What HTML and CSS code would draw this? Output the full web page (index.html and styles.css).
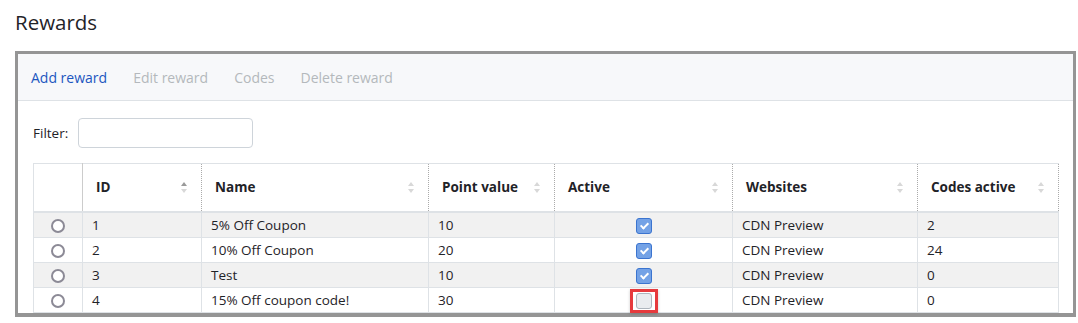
FILE: index.html
```html
<!DOCTYPE html>
<html lang="en">
<head>
  <meta charset="UTF-8" />
  <meta name="viewport" content="width=device-width, initial-scale=1.0"/>
  <title>Rewards</title>
  <link rel="stylesheet" href="styles.css">
</head>
<body>
  <h1 class="page-title">Rewards</h1>

  <div class="panel">
    <div class="toolbar">
      <a href="#" class="tool-link">Add reward</a>
      <span class="tool-link disabled">Edit reward</span>
      <span class="tool-link disabled">Codes</span>
      <span class="tool-link disabled">Delete reward</span>
    </div>

    <div class="filter-row">
      <label for="filter">Filter:</label>
      <input type="text" id="filter" />
    </div>

    <table class="grid">
      <colgroup>
        <col class="w-sel">
        <col class="w-id">
        <col class="w-name">
        <col class="w-points">
        <col class="w-active">
        <col class="w-sites">
        <col class="w-codes">
      </colgroup>
      <thead>
        <tr>
          <th class="sel-col"></th>
          <th><div class="th-inner">ID <span class="sort asc"></span></div></th>
          <th><div class="th-inner">Name <span class="sort"></span></div></th>
          <th><div class="th-inner">Point value <span class="sort"></span></div></th>
          <th><div class="th-inner">Active <span class="sort"></span></div></th>
          <th><div class="th-inner">Websites <span class="sort"></span></div></th>
          <th><div class="th-inner">Codes active <span class="sort"></span></div></th>
        </tr>
      </thead>
      <tbody>
        <tr>
          <td class="sel-col"><span class="radio"></span></td>
          <td>1</td>
          <td>5% Off Coupon</td>
          <td>10</td>
          <td class="center"><span class="check checked"></span></td>
          <td>CDN Preview</td>
          <td>2</td>
        </tr>
        <tr>
          <td class="sel-col"><span class="radio"></span></td>
          <td>2</td>
          <td>10% Off Coupon</td>
          <td>20</td>
          <td class="center"><span class="check checked"></span></td>
          <td>CDN Preview</td>
          <td>24</td>
        </tr>
        <tr>
          <td class="sel-col"><span class="radio"></span></td>
          <td>3</td>
          <td>Test</td>
          <td>10</td>
          <td class="center"><span class="check checked"></span></td>
          <td>CDN Preview</td>
          <td>0</td>
        </tr>
        <tr>
          <td class="sel-col"><span class="radio"></span></td>
          <td>4</td>
          <td>15% Off coupon code!</td>
          <td>30</td>
          <td class="center"><span class="highlight"><span class="check"></span></span></td>
          <td>CDN Preview</td>
          <td>0</td>
        </tr>
      </tbody>
    </table>
  </div>
</body>
</html>
```

FILE: styles.css
```css
body {
  font-family: "Open Sans", Arial, sans-serif;
  font-size: 13.5px;
  color: #1f2328;
  background: white;
  margin: 0;
}

.page-title {
  font-size: 20.5px;
  font-weight: normal;
  margin: 0;
  padding: 8px 0 0 15px;
  height: 43px;
}

.panel {
  margin-left: 15px;
  width: 1055px;
  border: 3px solid #959595;
  border-bottom-width: 4px;
}

.toolbar {
  display: flex;
  gap: 26px;
  align-items: center;
  height: 46px;
  padding: 0 13px;
  background: #f7f8fa;
  border-bottom: 1px solid #dee2e6;
}

.tool-link {
  color: #1c56c0;
  text-decoration: none;
  font-size: 14px;
}

.tool-link.disabled {
  color: #b4b8bc;
}

.filter-row {
  display: flex;
  align-items: center;
  gap: 10px;
  padding: 17px 15px 15px;
}

.filter-row input {
  width: 175px;
  height: 30px;
  box-sizing: border-box;
  border: 1px solid #ced4da;
  border-radius: 4px;
  font: inherit;
  padding: 4px 8px;
}

.grid {
  margin-left: 15px;
  width: 1025px;
  table-layout: fixed;
  border-collapse: collapse;
}

.w-sel { width: 49px; }
.w-id { width: 119px; }
.w-name { width: 227px; }
.w-points { width: 126px; }
.w-active { width: 178px; }
.w-sites { width: 185px; }
.w-codes { width: 141px; }

.grid th {
  height: 48px;
  padding: 0 14px 0 13px;
  text-align: left;
  font-weight: bold;
  border-top: 1px solid #dee2e6;
  border-bottom: 2px solid #dee2e6;
  border-left: 1px dotted #aaa;
  border-right: 1px dotted #aaa;
  box-sizing: border-box;
}

.grid th.sel-col {
  border-left: 1px solid #dee2e6;
  border-right: 1px solid #ccc;
}

.th-inner {
  display: flex;
  align-items: center;
  justify-content: space-between;
}

.sort {
  display: flex;
  flex-direction: column;
  gap: 3px;
}

.sort::before,
.sort::after {
  content: "";
  border-left: 3px solid transparent;
  border-right: 3px solid transparent;
}

.sort::before {
  border-bottom: 4px solid #d8d8d8;
}

.sort::after {
  border-top: 4px solid #d8d8d8;
}

.sort.asc::before {
  border-bottom-color: #9a9a9a;
}

.grid td {
  height: 24px;
  padding: 0 9px;
  border: 1px solid #dee2e6;
  white-space: nowrap;
}

.grid tbody tr:nth-child(odd) td {
  background: #f1f1f1;
}

.grid td.sel-col,
.grid td.center {
  text-align: center;
  padding: 0;
}

.radio {
  display: inline-block;
  width: 14px;
  height: 14px;
  box-sizing: border-box;
  border: 2px solid #8c8a96;
  border-radius: 50%;
  background: white;
  vertical-align: middle;
}

.check {
  display: inline-block;
  width: 16px;
  height: 16px;
  box-sizing: border-box;
  border-radius: 3px;
  border: 1px solid #adb5bd;
  background: #e9ecef;
  vertical-align: middle;
  position: relative;
}

.check.checked {
  background: #74a2e6;
  border-color: #3b74cf;
}

.check.checked::after {
  content: "";
  position: absolute;
  left: 5px;
  top: 2px;
  width: 3px;
  height: 6px;
  border: solid white;
  border-width: 0 2px 2px 0;
  transform: rotate(45deg);
}

/* red annotation box around the unchecked box */
.highlight {
  display: inline-block;
  padding: 1px 3px;
  margin: -4px 0;
  border: 3px solid #e63a3d;
  line-height: 0;
  vertical-align: middle;
  box-shadow: 0 1px 3px rgba(0,0,0,0.2);
}
```
